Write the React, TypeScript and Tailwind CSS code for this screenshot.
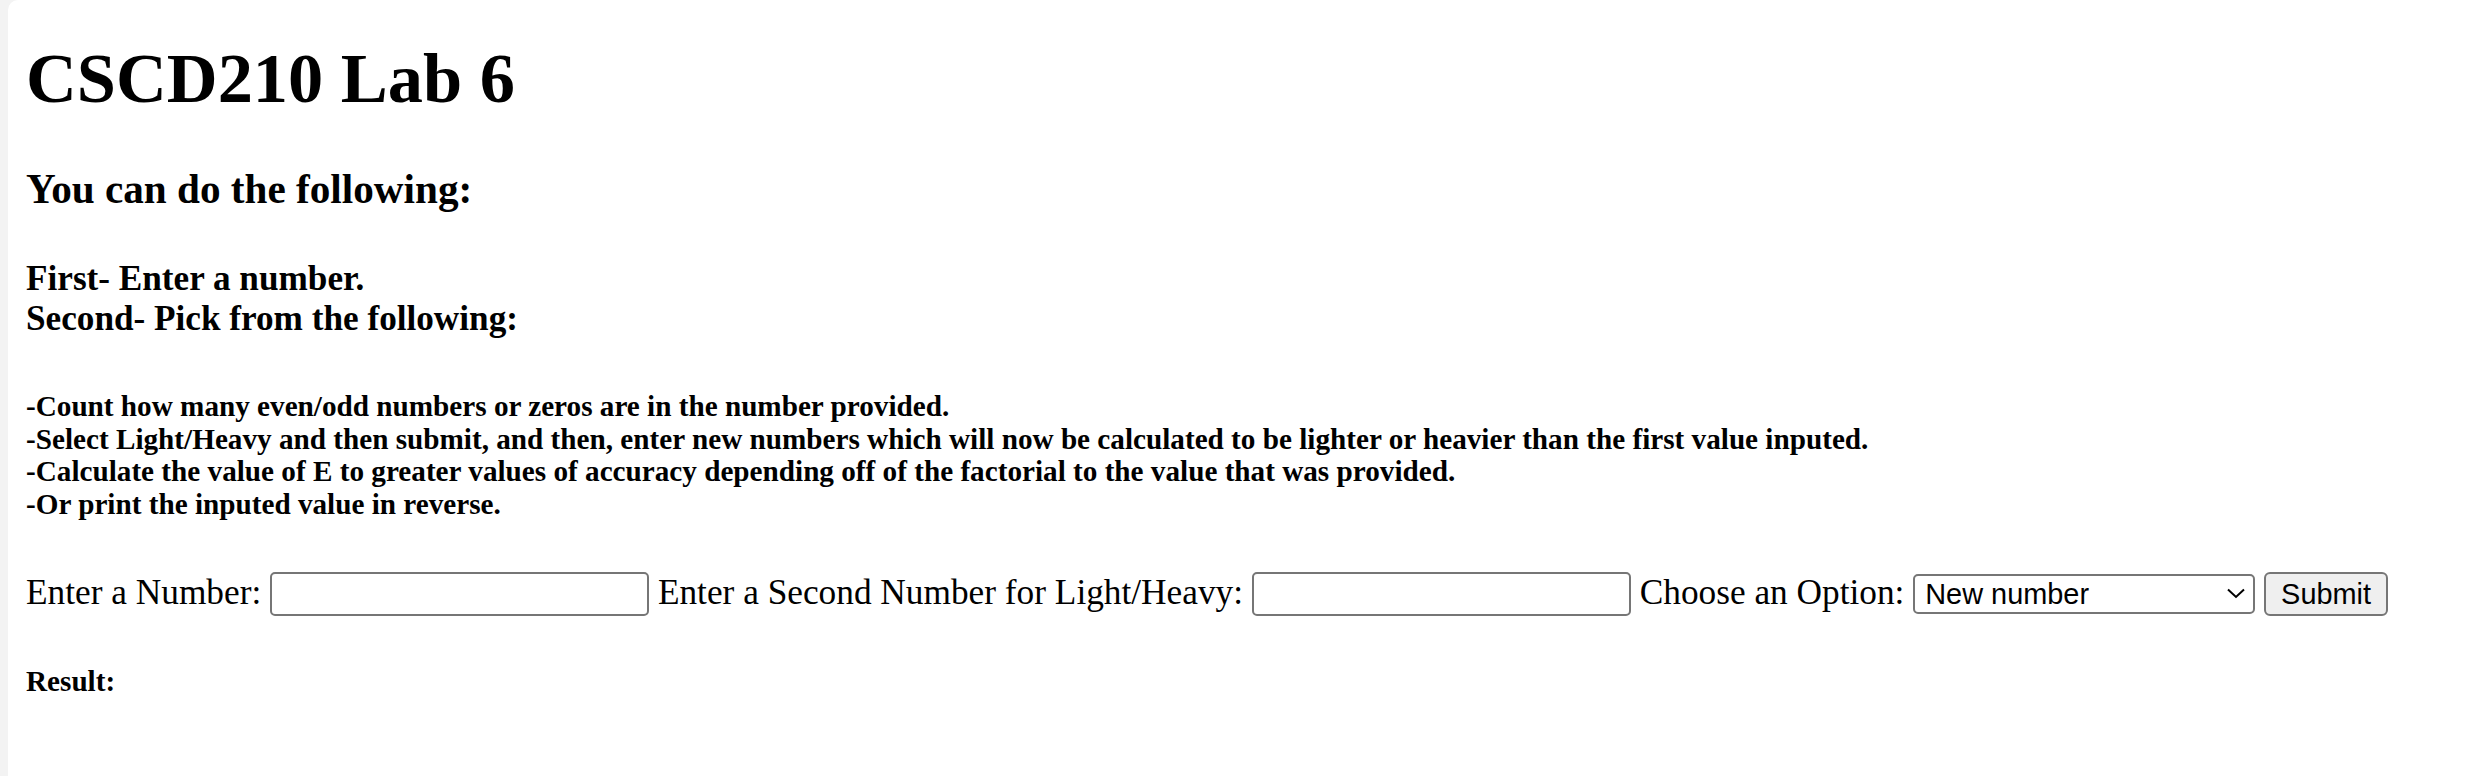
import React from "react";

export default function App() {
  return (
    <div className="h-screen w-full bg-[#f3f3f3] pl-[8px] font-['Liberation_Serif','Times_New_Roman',serif] text-black">
      <div className="h-full rounded-tl-[10px] bg-white pl-[18px] pt-[38px]">
        <h1 className="mb-[48px] text-[70.4px] font-bold leading-[80px]">CSCD210 Lab 6</h1>
        <h3 className="mb-[46px] text-[41.2px] font-bold leading-[47px]">You can do the following:</h3>
        <h4 className="mb-[51px] text-[35.2px] font-bold leading-[40px]">
          First- Enter a number.
          <br />
          Second- Pick from the following:
        </h4>
        <h5 className="mb-[51.5px] text-[29.2px] font-bold leading-[32.7px]">
          -Count how many even/odd numbers or zeros are in the number provided.
          <br />
          -Select Light/Heavy and then submit, and then, enter new numbers which will now be calculated to be lighter or heavier than the first value inputed.
          <br />
          -Calculate the value of E to greater values of accuracy depending off of the factorial to the value that was provided.
          <br />
          -Or print the inputed value in reverse.
        </h5>
        <form className="mb-[48.5px] text-[35.3px] leading-[40px] whitespace-nowrap" onSubmit={(e) => e.preventDefault()}>
          Enter a Number:{" "}
          <input
            type="text"
            className="h-[44px] w-[379px] rounded-[5px] border-2 border-[#767676] bg-white px-[4px] align-baseline font-['Liberation_Sans',Arial,sans-serif] text-[28.9px] leading-[normal]"
          />{" "}
          Enter a Second Number for Light/Heavy:{" "}
          <input
            type="text"
            className="h-[44px] w-[379px] rounded-[5px] border-2 border-[#767676] bg-white px-[4px] align-baseline font-['Liberation_Sans',Arial,sans-serif] text-[28.9px] leading-[normal]"
          />{" "}
          Choose an Option:{" "}
          <span className="relative inline-block align-baseline">
            <select
              defaultValue="new"
              className="h-[40px] w-[342px] appearance-none rounded-[5px] border-2 border-[#767676] bg-white pl-[10px] font-['Liberation_Sans',Arial,sans-serif] text-[28.9px] leading-[normal] text-black"
            >
              <option value="new">New number</option>
              <option value="count">Count</option>
              <option value="lh">Light/Heavy</option>
              <option value="e">Calculate E</option>
              <option value="rev">Reverse</option>
            </select>
            <svg
              className="pointer-events-none absolute right-[10px] top-[15px]"
              width="18"
              height="11"
              viewBox="0 0 18 11"
              fill="none"
            >
              <path d="M1 1.5 L9 9 L17 1.5" stroke="#000" strokeWidth="2" />
            </svg>
          </span>{" "}
          <button
            type="submit"
            className="h-[44px] w-[124px] rounded-[6px] border-2 border-[#767676] bg-[#efefef] align-baseline font-['Liberation_Sans',Arial,sans-serif] text-[28.9px] leading-[normal]"
          >
            Submit
          </button>
        </form>
        <h5 className="text-[29.2px] font-bold leading-[32.7px]">Result:</h5>
      </div>
    </div>
  );
}
